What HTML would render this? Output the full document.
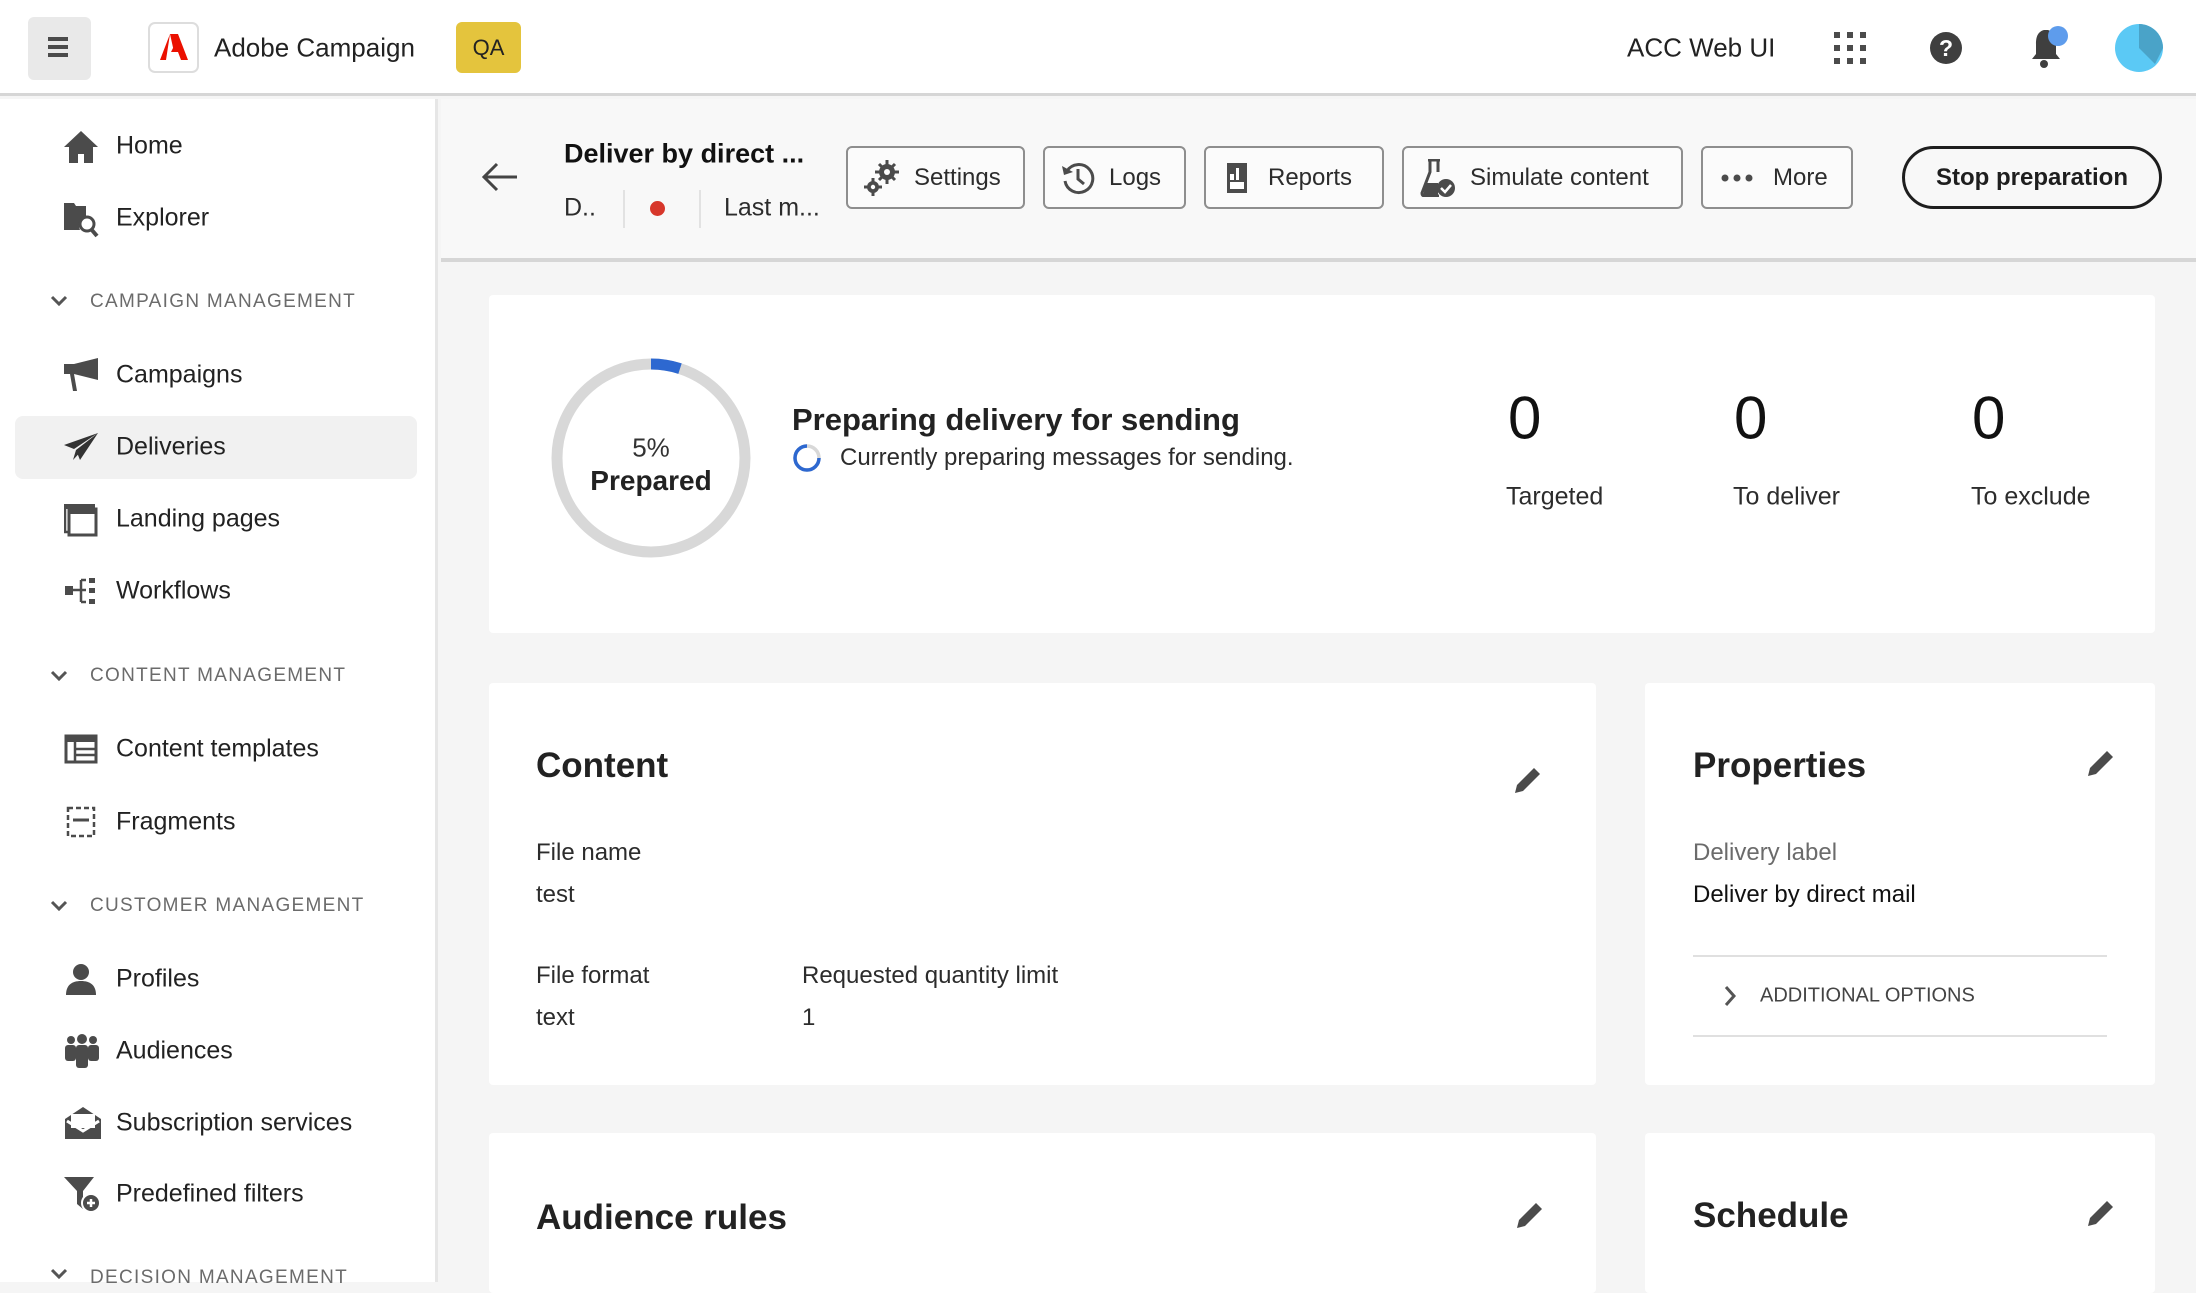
<!DOCTYPE html>
<html><head><meta charset="utf-8"><style>
*{margin:0;padding:0;box-sizing:border-box}
body{width:2196px;height:1282px;overflow:hidden;background:#f5f5f5;font-family:"Liberation Sans",sans-serif;color:#2c2c2c;position:relative}
.a{position:absolute;white-space:nowrap}
.c{transform:translateY(-50%)}
.top{position:absolute;left:0;top:0;width:2196px;height:96px;background:#fff;border-bottom:3px solid #d6d6d6}
.side{position:absolute;left:0;top:99px;width:438px;height:1183px;background:#fff;border-right:3px solid #e6e6e6}
.nav{font-size:25px;color:#222;left:116px}
.sec{font-size:19px;color:#6b6b6b;letter-spacing:1.3px;left:90px}
.ic{position:absolute;left:64px}
.hdr{position:absolute;left:441px;top:99px;width:1755px;height:163px;background:#f8f8f8;border-bottom:4px solid #d6d6d6}
.btn{position:absolute;top:146px;height:63px;border:2px solid #8e8e8e;border-radius:6px;background:#fbfbfb;font-size:24px;display:flex;align-items:center;padding-left:16px;gap:14px}
.card{position:absolute;background:#fff;border-radius:4px}
.h2{font-size:35px;font-weight:bold;color:#222}
.lbl{font-size:24px;color:#2c2c2c}
</style></head><body>
<div class="top"></div>
<div class="a" style="left:28px;top:17px;width:63px;height:63px;background:#e9e9e9;border-radius:6px"></div>
<div class="a" style="left:48px;top:37px;width:20px;height:4px;background:#4b4b4b;box-shadow:0 8px 0 #4b4b4b,0 16px 0 #4b4b4b"></div>
<div class="a" style="left:148px;top:22px;width:51px;height:51px;border:2px solid #ddd;border-radius:7px;background:#fff"></div>
<svg class="a" style="left:160px;top:34px" width="28" height="26" viewBox="0 0 28 26"><path d="M10 0h8l10 26h-7l-3-8h-7l3-6 2 6h-2z M10 0L0 26h6z" fill="#eb1000"/></svg>
<div class="a c" style="left:214px;top:48px;font-size:26px;color:#222">Adobe Campaign</div>
<div class="a" style="left:456px;top:22px;width:65px;height:51px;background:#e4c43d;border-radius:6px;font-size:22px;display:flex;align-items:center;justify-content:center;color:#222">QA</div>
<div class="a c" style="left:1627px;top:48px;font-size:26px;color:#222">ACC Web UI</div>
<svg class="a" style="left:1834px;top:32px" width="32" height="32"><g fill="#4b4b4b"><rect x="0" y="0" width="6" height="6"/><rect x="13" y="0" width="6" height="6"/><rect x="26" y="0" width="6" height="6"/><rect x="0" y="13" width="6" height="6"/><rect x="13" y="13" width="6" height="6"/><rect x="26" y="13" width="6" height="6"/><rect x="0" y="26" width="6" height="6"/><rect x="13" y="26" width="6" height="6"/><rect x="26" y="26" width="6" height="6"/></g></svg>
<div class="a" style="left:1930px;top:32px;width:32px;height:32px;border-radius:50%;background:#3f3f3f;color:#fff;font-weight:bold;font-size:23px;text-align:center;line-height:32px">?</div>
<svg class="a" style="left:2028px;top:26px" width="40" height="44"><path d="M16 4c-7 2-8 8-8 14v10l-4 5h28l-4-5V18c0-6-2-12-8-14z" fill="#3f3f3f"/><circle cx="16" cy="38" r="4" fill="#3f3f3f"/><circle cx="30" cy="10" r="10" fill="#5e9cec"/></svg>
<svg class="a" style="left:2115px;top:24px" width="48" height="48"><circle cx="24" cy="24" r="24" fill="#5bc9f5"/><path d="M24 0A24 24 0 0 1 48 24H24z M24 24h24L40 40z" fill="#4aa3c8"/></svg>

<div class="side"></div>
<div class="a" style="left:15px;top:416px;width:402px;height:63px;background:#f1f1f1;border-radius:8px"></div>
<svg class="ic" style="top:131px" width="34" height="32"><path d="M17 0L0 16h5v16h9v-9h6v9h9V16h5z" fill="#4b4b4b"/></svg>
<div class="a c nav" style="top:146px">Home</div>
<svg class="ic" style="top:200px" width="36" height="38"><path d="M0 3h10l2 3h-12z M0 6h22v10a10 10 0 0 0-6 14H0z" fill="#4b4b4b"/><circle cx="23" cy="24" r="7" fill="none" stroke="#4b4b4b" stroke-width="3"/><path d="M27 29l6 7" stroke="#4b4b4b" stroke-width="4"/></svg>
<div class="a c nav" style="top:218px">Explorer</div>
<svg class="a" style="left:50px;top:295px" width="18" height="12"><path d="M2 2l7 7 7-7" fill="none" stroke="#555" stroke-width="3"/></svg>
<div class="a c sec" style="top:302px">CAMPAIGN MANAGEMENT</div>
<svg class="ic" style="top:358px" width="36" height="34"><path d="M0 6h10l24-6v22L10 16H0z" fill="#4b4b4b"/><path d="M6 16l3 17h4L10 16z" fill="#4b4b4b"/></svg>
<div class="a c nav" style="top:375px">Campaigns</div>
<svg class="ic" style="top:433px" width="36" height="28"><path d="M34 0L0 12l10 4z M34 0L12 17l4 10z M34 0L12 17l-3 10z" fill="#333"/></svg>
<div class="a c nav" style="top:447px">Deliveries</div>
<svg class="ic" style="top:503px" width="34" height="34"><path d="M1 1h30v5H1z" fill="#4b4b4b"/><path d="M1 1v28h4" fill="none" stroke="#4b4b4b" stroke-width="2.5"/><rect x="5" y="6" width="27" height="26" fill="none" stroke="#4b4b4b" stroke-width="3"/><rect x="5" y="6" width="27" height="5" fill="#4b4b4b"/></svg>
<div class="a c nav" style="top:519px">Landing pages</div>
<svg class="ic" style="top:578px" width="34" height="26"><rect x="1" y="8" width="8" height="9" fill="#4b4b4b"/><path d="M9 12h8M17 2v22M17 2h5M17 12h5M17 24h5" stroke="#4b4b4b" stroke-width="2.5" fill="none"/><rect x="25" y="0" width="6" height="5" fill="#4b4b4b"/><rect x="25" y="10" width="6" height="5" fill="#4b4b4b"/><rect x="25" y="21" width="6" height="5" fill="#4b4b4b"/></svg>
<div class="a c nav" style="top:591px">Workflows</div>
<svg class="a" style="left:50px;top:670px" width="18" height="12"><path d="M2 2l7 7 7-7" fill="none" stroke="#555" stroke-width="3"/></svg>
<div class="a c sec" style="top:676px">CONTENT MANAGEMENT</div>
<svg class="ic" style="top:734px" width="34" height="30"><rect x="2" y="2" width="30" height="26" fill="none" stroke="#4b4b4b" stroke-width="3"/><rect x="2" y="2" width="30" height="6" fill="#4b4b4b"/><path d="M11 8v20M11 15h21M11 21h21" stroke="#4b4b4b" stroke-width="2.5"/></svg>
<div class="a c nav" style="top:749px">Content templates</div>
<svg class="ic" style="top:806px" width="34" height="32"><rect x="4" y="2" width="26" height="28" fill="none" stroke="#4b4b4b" stroke-width="2.5" stroke-dasharray="5 3"/><path d="M9 14h16" stroke="#4b4b4b" stroke-width="3"/></svg>
<div class="a c nav" style="top:822px">Fragments</div>
<svg class="a" style="left:50px;top:900px" width="18" height="12"><path d="M2 2l7 7 7-7" fill="none" stroke="#555" stroke-width="3"/></svg>
<div class="a c sec" style="top:906px">CUSTOMER MANAGEMENT</div>
<svg class="ic" style="top:963px" width="34" height="32"><circle cx="17" cy="9" r="8" fill="#4b4b4b"/><path d="M2 32c0-10 6-14 15-14s15 4 15 14z" fill="#4b4b4b"/></svg>
<div class="a c nav" style="top:979px">Profiles</div>
<svg class="ic" style="top:1034px" width="36" height="34"><g fill="#4b4b4b"><circle cx="7" cy="6" r="4"/><circle cx="18" cy="5" r="5"/><circle cx="29" cy="6" r="4"/><rect x="1" y="11" width="11" height="16" rx="3"/><rect x="12" y="11" width="12" height="23" rx="3"/><rect x="24" y="11" width="11" height="16" rx="3"/></g></svg>
<div class="a c nav" style="top:1051px">Audiences</div>
<svg class="ic" style="top:1106px" width="38" height="34"><path d="M19 1L1 13v20h36V13z" fill="#4b4b4b"/><rect x="7" y="8" width="24" height="14" fill="#fff"/><path d="M3 15l16 10 16-10" fill="none" stroke="#fff" stroke-width="3"/></svg>
<div class="a c nav" style="top:1123px">Subscription services</div>
<svg class="ic" style="top:1176px" width="38" height="38"><path d="M0 1h30L19 15v18l-6-5V15z" fill="#4b4b4b"/><circle cx="27" cy="27" r="9" fill="#4b4b4b" stroke="#fff" stroke-width="2"/><path d="M23 27h8M27 23v8" stroke="#fff" stroke-width="2.5"/></svg>
<div class="a c nav" style="top:1194px">Predefined filters</div>
<svg class="a" style="left:50px;top:1268px" width="18" height="12"><path d="M2 2l7 7 7-7" fill="none" stroke="#555" stroke-width="3"/></svg>
<div class="a c sec" style="top:1278px">DECISION MANAGEMENT</div>

<div class="hdr"></div>
<svg class="a" style="left:481px;top:162px" width="38" height="30"><path d="M36 15H3M16 2L3 15l13 13" fill="none" stroke="#444" stroke-width="3"/></svg>
<div class="a c" style="left:564px;top:154px;font-size:27px;font-weight:bold;color:#111">Deliver by direct ...</div>
<div class="a c" style="left:564px;top:208px;font-size:25px">D..</div>
<div class="a" style="left:623px;top:190px;width:2px;height:38px;background:#e2e2e2"></div>
<div class="a" style="left:650px;top:201px;width:15px;height:15px;border-radius:50%;background:#d7372b"></div>
<div class="a" style="left:699px;top:190px;width:2px;height:38px;background:#e2e2e2"></div>
<div class="a c" style="left:724px;top:208px;font-size:25px">Last m...</div>
<div class="btn" style="left:846px;width:179px"><svg width="36" height="36"><g fill="#4b4b4b"><circle cx="23" cy="12" r="8"/><circle cx="9" cy="27" r="6"/></g><path d="M23 0v24M11 12h24M15 4l16 16M31 4L15 20M9 18v18M0 27h18" stroke="#4b4b4b" stroke-width="3"/><circle cx="23" cy="12" r="3" fill="#fff"/><circle cx="9" cy="27" r="2.2" fill="#fff"/></svg><span>Settings</span></div>
<div class="btn" style="left:1043px;width:143px"><svg width="34" height="34"><path d="M6 10A14 14 0 1 1 4 20" fill="none" stroke="#4b4b4b" stroke-width="3"/><path d="M1 5l2 9 9-3z" fill="#4b4b4b"/><path d="M17 8v10l6 5" fill="none" stroke="#4b4b4b" stroke-width="3"/></svg><span>Logs</span></div>
<div class="btn" style="left:1204px;width:180px;padding-left:20px;gap:20px"><svg width="22" height="32"><rect x="1" y="1" width="20" height="30" fill="#4b4b4b"/><rect x="4" y="20" width="14" height="7" fill="#fff"/><rect x="4" y="12" width="4" height="6" fill="#fff"/><rect x="10" y="6" width="3" height="12" fill="#fff"/></svg><span>Reports</span></div>
<div class="btn" style="left:1402px;width:281px"><svg width="36" height="38"><path d="M8 1h12M10 1v12L2 34c0 2 1 3 3 3h14" fill="none" stroke="#4b4b4b" stroke-width="3"/><path d="M18 1v12" stroke="#4b4b4b" stroke-width="3"/><path d="M6 24h12v13H3z" fill="#4b4b4b"/><circle cx="26" cy="29" r="9" fill="#4b4b4b"/><path d="M21 29l4 4 6-7" fill="none" stroke="#fff" stroke-width="2.5"/></svg><span>Simulate content</span></div>
<div class="btn" style="left:1701px;width:152px;padding-left:18px;gap:20px"><svg width="32" height="8"><g fill="#4b4b4b"><circle cx="4" cy="4" r="3.5"/><circle cx="16" cy="4" r="3.5"/><circle cx="28" cy="4" r="3.5"/></g></svg><span>More</span></div>
<div class="a" style="left:1902px;top:146px;width:260px;height:63px;border:3.5px solid #1e1e1e;border-radius:32px;font-size:24px;font-weight:bold;display:flex;align-items:center;justify-content:center;color:#1e1e1e">Stop preparation</div>

<div class="card" style="left:489px;top:295px;width:1666px;height:338px"></div>
<svg class="a" style="left:551px;top:358px" width="200" height="200"><circle cx="100" cy="100" r="94" fill="none" stroke="#d8d8d8" stroke-width="11"/><circle cx="100" cy="100" r="94" fill="none" stroke="#2d68d0" stroke-width="11" stroke-dasharray="29.5 600" transform="rotate(-90 100 100)"/></svg>
<div class="a" style="left:651px;top:448px;transform:translate(-50%,-50%);font-size:26px;color:#333">5%</div>
<div class="a" style="left:651px;top:481px;transform:translate(-50%,-50%);font-size:28px;font-weight:bold;color:#222">Prepared</div>
<div class="a c" style="left:792px;top:420px;font-size:31px;font-weight:bold;color:#222">Preparing delivery for sending</div>
<svg class="a" style="left:792px;top:443px" width="30" height="30"><circle cx="15" cy="15" r="12" fill="none" stroke="#d8d8d8" stroke-width="3.5"/><path d="M15 3A12 12 0 1 0 27 15" fill="none" stroke="#2d68d0" stroke-width="3.5"/></svg>
<div class="a c" style="left:840px;top:458px;font-size:24px">Currently preparing messages for sending.</div>
<div class="a c" style="left:1508px;top:418px;font-size:60px;color:#111">0</div>
<div class="a c" style="left:1734px;top:418px;font-size:60px;color:#111">0</div>
<div class="a c" style="left:1972px;top:418px;font-size:60px;color:#111">0</div>
<div class="a c" style="left:1506px;top:497px;font-size:25px">Targeted</div>
<div class="a c" style="left:1733px;top:497px;font-size:25px">To deliver</div>
<div class="a c" style="left:1971px;top:497px;font-size:25px">To exclude</div>

<div class="card" style="left:489px;top:683px;width:1107px;height:402px"></div>
<div class="a c h2" style="left:536px;top:766px">Content</div>
<svg class="a" style="left:1512px;top:764px" width="32" height="32"><path d="M3 29l2-8L22 4l6 6-17 17z" fill="#4b4b4b"/></svg>
<div class="a c lbl" style="left:536px;top:853px">File name</div>
<div class="a c lbl" style="left:536px;top:895px">test</div>
<div class="a c lbl" style="left:536px;top:976px">File format</div>
<div class="a c lbl" style="left:536px;top:1018px">text</div>
<div class="a c lbl" style="left:802px;top:976px">Requested quantity limit</div>
<div class="a c lbl" style="left:802px;top:1018px">1</div>

<div class="card" style="left:1645px;top:683px;width:510px;height:402px"></div>
<div class="a c h2" style="left:1693px;top:766px">Properties</div>
<svg class="a" style="left:2085px;top:747px" width="32" height="32"><path d="M3 29l2-8L22 4l6 6-17 17z" fill="#4b4b4b"/></svg>
<div class="a c lbl" style="left:1693px;top:853px;color:#6b6b6b">Delivery label</div>
<div class="a c lbl" style="left:1693px;top:895px;color:#111">Deliver by direct mail</div>
<div class="a" style="left:1693px;top:955px;width:414px;height:2px;background:#e0e0e0"></div>
<svg class="a" style="left:1723px;top:985px" width="14" height="22"><path d="M3 2l8 9-8 9" fill="none" stroke="#555" stroke-width="3"/></svg>
<div class="a c" style="left:1760px;top:996px;font-size:20px;color:#444">ADDITIONAL OPTIONS</div>
<div class="a" style="left:1693px;top:1035px;width:414px;height:2px;background:#e0e0e0"></div>

<div class="card" style="left:489px;top:1133px;width:1107px;height:160px"></div>
<div class="a c h2" style="left:536px;top:1218px">Audience rules</div>
<svg class="a" style="left:1514px;top:1199px" width="32" height="32"><path d="M3 29l2-8L22 4l6 6-17 17z" fill="#4b4b4b"/></svg>
<div class="card" style="left:1645px;top:1133px;width:510px;height:160px"></div>
<div class="a c h2" style="left:1693px;top:1216px">Schedule</div>
<svg class="a" style="left:2085px;top:1197px" width="32" height="32"><path d="M3 29l2-8L22 4l6 6-17 17z" fill="#4b4b4b"/></svg>
</body></html>
